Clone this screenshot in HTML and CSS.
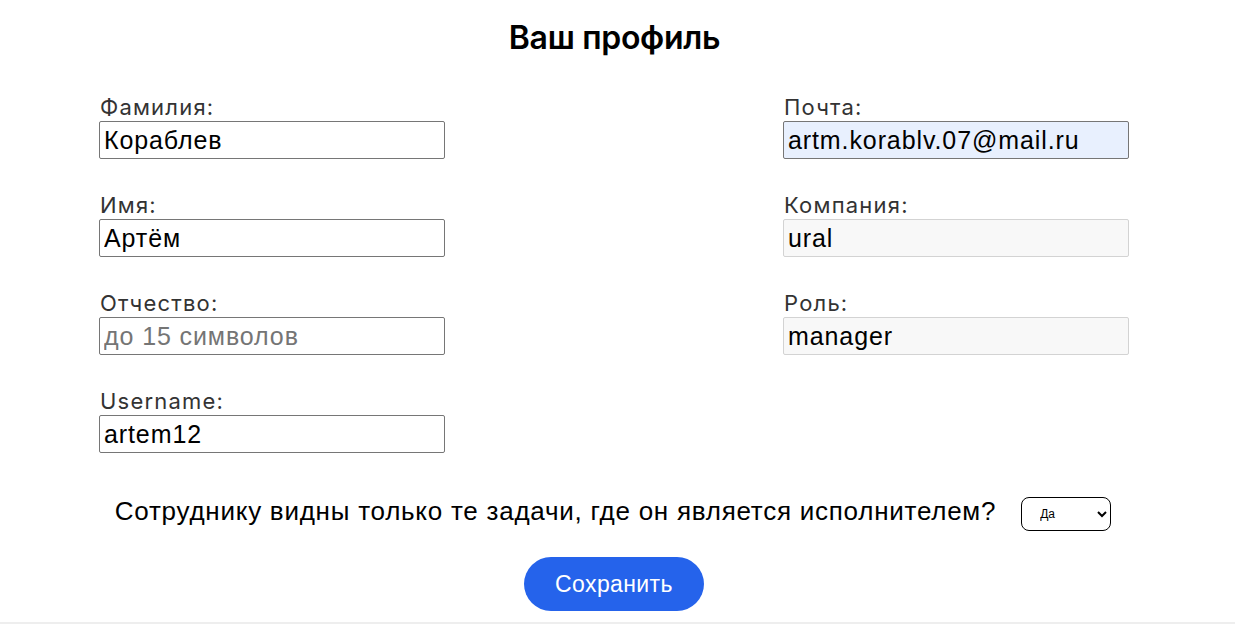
FILE: index.html
```html
<!DOCTYPE html>
<html lang="ru">
<head>
<meta charset="utf-8">
<title>Ваш профиль</title>
<link rel="stylesheet" href="styles.css">
</head>
<body>
<main class="profile">
  <h1 class="title">Ваш профиль</h1>
  <form class="form">
    <div class="columns">
      <div class="column">
        <div class="field">
          <label class="label" for="last">Фамилия:</label>
          <input class="input" id="last" type="text" value="Кораблев">
        </div>
        <div class="field">
          <label class="label" for="first">Имя:</label>
          <input class="input" id="first" type="text" value="Артём">
        </div>
        <div class="field">
          <label class="label" for="middle">Отчество:</label>
          <input class="input" id="middle" type="text" placeholder="до 15 символов">
        </div>
        <div class="field">
          <label class="label" for="user">Username:</label>
          <input class="input" id="user" type="text" value="artem12">
        </div>
      </div>
      <div class="column">
        <div class="field">
          <label class="label" for="mail">Почта:</label>
          <input class="input input-autofill" id="mail" type="text" value="artm.korablv.07@mail.ru">
        </div>
        <div class="field">
          <label class="label" for="company">Компания:</label>
          <input class="input input-readonly" id="company" type="text" value="ural" readonly>
        </div>
        <div class="field">
          <label class="label" for="role">Роль:</label>
          <input class="input input-readonly" id="role" type="text" value="manager" readonly>
        </div>
      </div>
    </div>
    <div class="question">
      <span class="question-text">Сотруднику видны только те задачи, где он является исполнителем?</span>
      <select class="select">
        <option>Да</option>
        <option>Нет</option>
      </select>
    </div>
    <div class="actions">
      <button class="save" type="button">Сохранить</button>
    </div>
  </form>
</main>
<div class="divider"></div>
</body>
</html>
```

FILE: styles.css
```css
html, body {
  margin: 0;
  padding: 0;
  background: #fff;
}

body {
  font-family: "Liberation Sans", Arial, sans-serif;
  color: #000;
  height: 624px;
  display: flex;
  flex-direction: column;
}

.profile {
  flex: 1;
  display: flex;
  flex-direction: column;
}

.title {
  margin: 18px 0 0;
  font-family: Inter, "Noto Sans", sans-serif;
  font-weight: 600;
  font-size: 32px;
  line-height: 40px;
  text-align: center;
  letter-spacing: -0.3px;
  padding-right: 6px;
}

.form {
  display: flex;
  flex-direction: column;
}

.columns {
  display: flex;
  justify-content: space-between;
  padding: 0 106px 0 99px;
  margin-top: 37px;
}

.column {
  width: 346px;
  display: flex;
  flex-direction: column;
  gap: 34px;
}

.field {
  display: flex;
  flex-direction: column;
}

.label {
  font-family: Inter, "Noto Sans", sans-serif;
  font-size: 22px;
  line-height: 24px;
  letter-spacing: 1.2px;
  color: #333;
  margin-bottom: 2px;
  padding-left: 1px;
}

.input {
  box-sizing: border-box;
  width: 346px;
  height: 38px;
  margin: 0;
  padding: 0 4px;
  border: 1px solid #767676;
  border-radius: 2px;
  font-family: "Liberation Sans", Arial, sans-serif;
  font-size: 25px;
  letter-spacing: 0.9px;
  color: #000;
  background: #fff;
  outline: none;
}

.input::placeholder {
  color: #757575;
}

.input-autofill {
  background: #e8f0fe;
}

.input-readonly {
  background: #f8f8f8;
  border-color: #d3d3d3;
}

.question {
  display: flex;
  justify-content: center;
  align-items: center;
  gap: 25px;
  margin-top: 44px;
  padding-right: 9px;
}

.question-text {
  font-size: 26px;
  letter-spacing: 0.75px;
  line-height: 28px;
  margin-top: -7px;
}

.select {
  box-sizing: border-box;
  width: 90px;
  height: 34px;
  border: 1px solid #000;
  border-radius: 8px;
  background: #fff;
  font-family: "Liberation Sans", Arial, sans-serif;
  font-size: 12px;
  padding: 0 4px 0 14px;
  color: #000;
}

.actions {
  display: flex;
  justify-content: center;
  margin-top: 26px;
}

.save {
  width: 180px;
  height: 54px;
  border: none;
  border-radius: 27px;
  background: #2563eb;
  color: #fff;
  font-family: "Liberation Sans", Arial, sans-serif;
  font-size: 23px;
  letter-spacing: 0.4px;
  margin-right: 7px;
  cursor: pointer;
}

.divider {
  height: 2px;
  background: #eeeeee;
}
```
